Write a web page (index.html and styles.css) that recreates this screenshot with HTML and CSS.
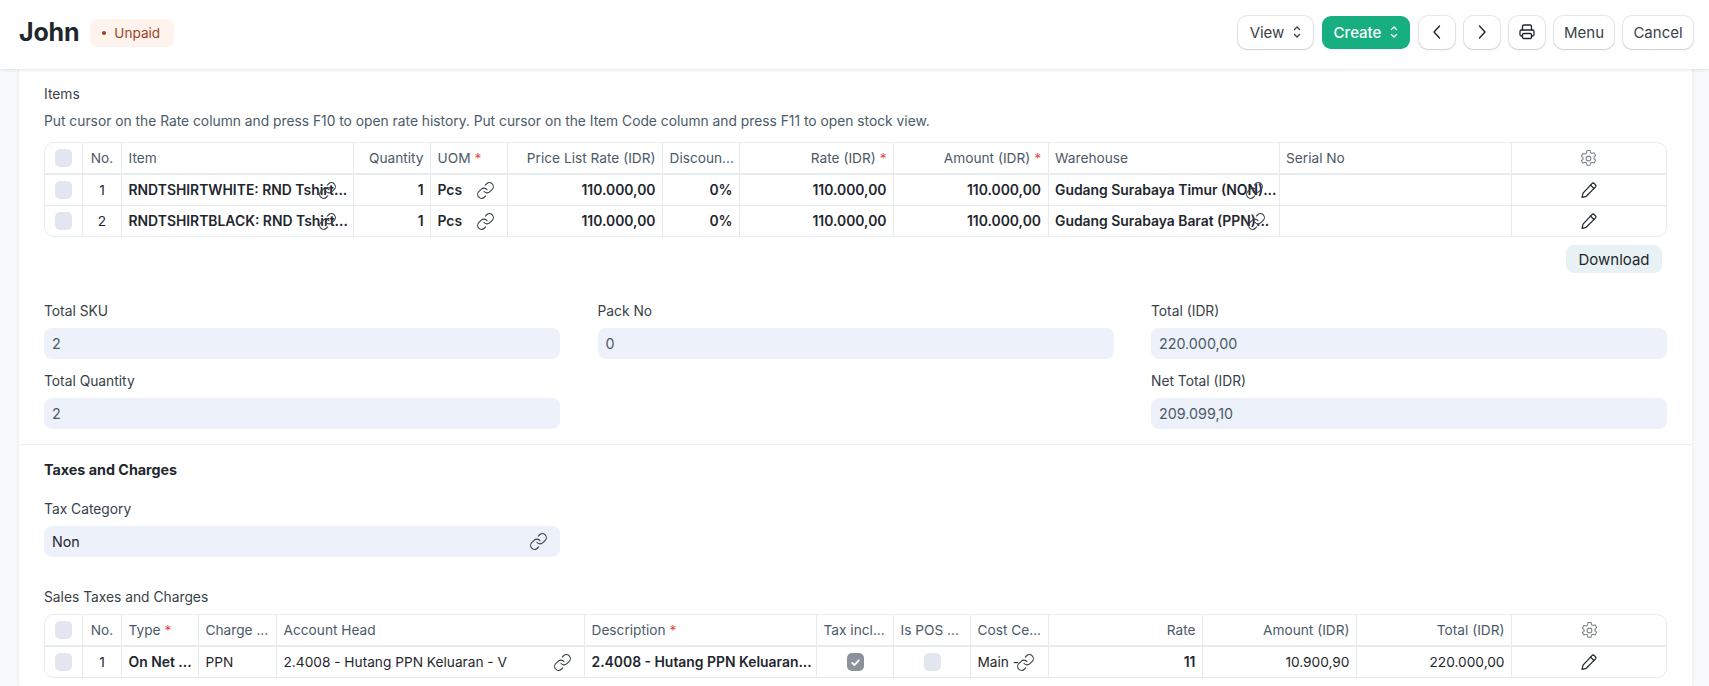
FILE: index.html
```html
<!DOCTYPE html>
<html lang="en">
<head>
  <meta charset="UTF-8" />
  <title>John</title>
  <link rel="stylesheet" href="styles.css">
</head>
<body>
  <svg class="icon-defs" aria-hidden="true">
    <symbol id="i-link" viewBox="0 0 24 24" fill="none" stroke="currentColor" stroke-width="1.350" stroke-linecap="round" stroke-linejoin="round">
      <path d="M10 13a5 5 0 0 0 7.540.540l3-3a5 5 0 0 0-7.070-7.070l-1.720 1.710"/>
      <path d="M14 11a5 5 0 0 0-7.540-.540l-3 3a5 5 0 0 0 7.070 7.070l1.710-1.710"/>
    </symbol>
    <symbol id="i-pencil" viewBox="0 0 16 16" fill="none" stroke="currentColor" stroke-width="1.100" stroke-linecap="round" stroke-linejoin="round">
      <path d="M10.600 2.300a1.500 1.500 0 0 1 2.100 0l1 1a1.500 1.500 0 0 1 0 2.100L5.500 13.600l-3.700 1 .9-3.800z"/>
      <path d="M9.300 3.600l3.100 3.100"/>
    </symbol>
    <symbol id="i-gear" viewBox="0 0 16 16" fill="none" stroke="currentColor" stroke-width="0.900" stroke-linejoin="round">
      <path d="M6.700 1.200h2.600l.4 1.900 1.200.7 1.800-.6 1.300 2.300-1.400 1.200v1.500l1.400 1.200-1.300 2.300-1.800-.6-1.200.7-.4 1.900H6.700l-.4-1.900-1.200-.7-1.800.6L2 9.900l1.400-1.200V7.200L2 6l1.300-2.300 1.800.6 1.200-.7z"/>
      <circle cx="8" cy="8" r="2"/>
    </symbol>
    <symbol id="i-updown" viewBox="0 0 8 14" fill="none" stroke="currentColor" stroke-width="1.300" stroke-linecap="round" stroke-linejoin="round">
      <path d="M1.500 4.500L4 2l2.500 2.500"/>
      <path d="M1.500 9.500L4 12l2.500-2.500"/>
    </symbol>
  </svg>

  <header class="page-head">
    <div class="title-wrap">
      <h1 class="title">John</h1>
      <span class="badge"><i class="badge-dot"></i>Unpaid</span>
    </div>
    <div class="actions">
      <button class="btn btn-view">View <svg class="updown"><use href="#i-updown"/></svg></button>
      <button class="btn btn-primary">Create <svg class="updown"><use href="#i-updown"/></svg></button>
      <button class="btn btn-icon">
        <svg width="16" height="16" viewBox="0 0 16 16" fill="none" stroke="currentColor" stroke-width="1.400" stroke-linecap="round" stroke-linejoin="round"><path d="M10.500 2L5 8l5.500 6"/></svg>
      </button>
      <button class="btn btn-icon">
        <svg width="16" height="16" viewBox="0 0 16 16" fill="none" stroke="currentColor" stroke-width="1.400" stroke-linecap="round" stroke-linejoin="round"><path d="M5.500 2L11 8l-5.500 6"/></svg>
      </button>
      <button class="btn btn-icon">
        <svg width="18" height="18" viewBox="0 0 18 18" fill="none" stroke="currentColor" stroke-width="1.300" stroke-linecap="round" stroke-linejoin="round"><path d="M4.500 7V3.500a1.500 1.500 0 0 1 1.500-1.500h6a1.500 1.500 0 0 1 1.500 1.500V7"/><path d="M4.500 13H3.500A1.500 1.500 0 0 1 2 11.500V8.500A1.500 1.500 0 0 1 3.500 7h11A1.500 1.500 0 0 1 16 8.500v3a1.500 1.500 0 0 1-1.500 1.500h-1"/><rect x="4.500" y="10.500" width="9" height="5" rx="1.200"/></svg>
      </button>
      <button class="btn btn-menu">Menu</button>
      <button class="btn btn-cancel">Cancel</button>
    </div>
  </header>

  <main class="sheet">
    <section class="items-section">
      <div class="grid-label">Items</div>
      <p class="grid-help">Put cursor on the Rate column and press F10 to open rate history. Put cursor on the Item Code column and press F11 to open stock view.</p>

      <div class="grid items-grid">
        <div class="row row-head">
          <div class="cell center"><span class="check"></span></div>
          <div class="cell center">No.</div>
          <div class="cell">Item</div>
          <div class="cell right">Quantity</div>
          <div class="cell">UOM <span class="req">*</span></div>
          <div class="cell right">Price List Rate (IDR)</div>
          <div class="cell">Discoun...</div>
          <div class="cell right">Rate (IDR) <span class="req">*</span></div>
          <div class="cell right">Amount (IDR) <span class="req">*</span></div>
          <div class="cell">Warehouse</div>
          <div class="cell">Serial No</div>
          <div class="cell center"><svg class="gear"><use href="#i-gear"/></svg></div>
        </div>
        <div class="row">
          <div class="cell center"><span class="check"></span></div>
          <div class="cell center">1</div>
          <div class="cell bold clip">RNDTSHIRTWHITE: RND Tshirt...<svg class="link link-item"><use href="#i-link"/></svg></div>
          <div class="cell right bold">1</div>
          <div class="cell bold">Pcs<svg class="link"><use href="#i-link"/></svg></div>
          <div class="cell right bold">110.000,00</div>
          <div class="cell right bold">0%</div>
          <div class="cell right bold">110.000,00</div>
          <div class="cell right bold">110.000,00</div>
          <div class="cell bold clip">Gudang Surabaya Timur (NON)...<svg class="link link-wh"><use href="#i-link"/></svg></div>
          <div class="cell"></div>
          <div class="cell center"><svg class="pencil"><use href="#i-pencil"/></svg></div>
        </div>
        <div class="row">
          <div class="cell center"><span class="check"></span></div>
          <div class="cell center">2</div>
          <div class="cell bold clip">RNDTSHIRTBLACK: RND Tshirt...<svg class="link link-item"><use href="#i-link"/></svg></div>
          <div class="cell right bold">1</div>
          <div class="cell bold">Pcs<svg class="link"><use href="#i-link"/></svg></div>
          <div class="cell right bold">110.000,00</div>
          <div class="cell right bold">0%</div>
          <div class="cell right bold">110.000,00</div>
          <div class="cell right bold">110.000,00</div>
          <div class="cell bold clip">Gudang Surabaya Barat (PPN)...<svg class="link link-wh2"><use href="#i-link"/></svg></div>
          <div class="cell"></div>
          <div class="cell center"><svg class="pencil"><use href="#i-pencil"/></svg></div>
        </div>
      </div>

      <div class="grid-footer">
        <button class="btn-download">Download</button>
      </div>

      <div class="field-columns">
        <div class="field-col">
          <div class="field">
            <label>Total SKU</label>
            <div class="control muted">2</div>
          </div>
          <div class="field">
            <label>Total Quantity</label>
            <div class="control muted">2</div>
          </div>
        </div>
        <div class="field-col">
          <div class="field">
            <label>Pack No</label>
            <div class="control muted">0</div>
          </div>
        </div>
        <div class="field-col">
          <div class="field">
            <label>Total (IDR)</label>
            <div class="control muted">220.000,00</div>
          </div>
          <div class="field">
            <label>Net Total (IDR)</label>
            <div class="control muted">209.099,10</div>
          </div>
        </div>
      </div>
    </section>

    <section class="taxes-section">
      <h2 class="section-title">Taxes and Charges</h2>
      <div class="field-columns">
        <div class="field-col">
          <div class="field">
            <label>Tax Category</label>
            <div class="control">Non<svg class="link"><use href="#i-link"/></svg></div>
          </div>
        </div>
      </div>

      <div class="grid-label taxes-label">Sales Taxes and Charges</div>
      <div class="grid taxes-grid">
        <div class="row row-head">
          <div class="cell center"><span class="check"></span></div>
          <div class="cell center">No.</div>
          <div class="cell">Type <span class="req">*</span></div>
          <div class="cell">Charge ...</div>
          <div class="cell">Account Head</div>
          <div class="cell">Description <span class="req">*</span></div>
          <div class="cell">Tax incl...</div>
          <div class="cell">Is POS ...</div>
          <div class="cell">Cost Ce...</div>
          <div class="cell right">Rate</div>
          <div class="cell right">Amount (IDR)</div>
          <div class="cell right">Total (IDR)</div>
          <div class="cell center"><svg class="gear"><use href="#i-gear"/></svg></div>
        </div>
        <div class="row">
          <div class="cell center"><span class="check"></span></div>
          <div class="cell center">1</div>
          <div class="cell bold">On Net ...</div>
          <div class="cell">PPN</div>
          <div class="cell">2.4008 - Hutang PPN Keluaran - V<svg class="link"><use href="#i-link"/></svg></div>
          <div class="cell bold">2.4008 - Hutang PPN Keluaran...</div>
          <div class="cell center">
            <span class="check checked">
              <svg width="11" height="11" viewBox="0 0 10 10" fill="none" stroke="#fff" stroke-width="1.600" stroke-linecap="round" stroke-linejoin="round"><path d="M2 5.300l2 2 4-4.300"/></svg>
            </span>
          </div>
          <div class="cell center"><span class="check"></span></div>
          <div class="cell clip">Main -<svg class="link link-cost"><use href="#i-link"/></svg></div>
          <div class="cell right bold">11</div>
          <div class="cell right">10.900,90</div>
          <div class="cell right">220.000,00</div>
          <div class="cell center"><svg class="pencil"><use href="#i-pencil"/></svg></div>
        </div>
      </div>
    </section>
  </main>
</body>
</html>
```

FILE: styles.css
```css
* {
  box-sizing: border-box;
}

html, body {
  height: 100%;
}

body {
  margin: 0;
  background: #f8f9fa;
  color: #1f272e;
  font-family: "Inter", "Liberation Sans", sans-serif;
  font-size: 14.3px;
  overflow: hidden;
}

.icon-defs {
  display: none;
}

/* page head */
.page-head {
  height: 69px;
  background: #fff;
  box-shadow: 0 1px 3px rgba(25, 39, 52, 0.12);
  display: flex;
  align-items: center;
  justify-content: space-between;
  padding: 0 16px 5px 19px;
  position: relative;
}

.title-wrap {
  display: flex;
  align-items: center;
  gap: 11px;
}

.title {
  margin: 0;
  font-size: 25px;
  font-weight: 700;
  letter-spacing: -0.2px;
}

.badge {
  display: flex;
  align-items: center;
  height: 28px;
  margin-top: 1px;
  padding: 0 14px 0 12px;
  background: #fff3ed;
  color: #9c3f1f;
  border-radius: 8px;
  font-size: 13.600px;
}

.badge-dot {
  width: 4px;
  height: 4px;
  margin-right: 8px;
  border-radius: 50%;
  background: #9c3f1f;
}

.actions {
  display: flex;
  gap: 9px;
}

.btn {
  height: 33px;
  display: flex;
  align-items: center;
  justify-content: center;
  padding: 0;
  font: inherit;
  font-size: 15px;
  color: #383f47;
  background: #fff;
  border: none;
  border-radius: 9px;
  box-shadow: 0 0 0 1px rgba(25, 39, 52, 0.1), 0 1px 2px rgba(25, 39, 52, 0.14);
}

.btn-view { width: 75px; gap: 9px; }
.btn-primary { width: 88px; gap: 9px; background: #17ae80; color: #fff; box-shadow: none; font-weight: 500; }
.btn-icon { width: 36px; color: #1f272e; }
.btn-menu { width: 60px; }
.btn-cancel { width: 70px; }

.updown {
  width: 8px;
  height: 14px;
}

/* white form sheet */
.sheet {
  margin: 0 17px 0 19px;
  min-height: 617px;
  background: #fff;
  box-shadow: 0 0 3px rgba(25, 39, 52, 0.1);
}

.items-section {
  padding: 15px 25px 15px;
  border-bottom: 1px solid #edf0f2;
}

.grid-label {
  line-height: 20px;
  color: #383f47;
  font-size: 13.800px;
}

.grid-help {
  margin: 7px 0 11px;
  line-height: 20px;
  color: #4c5a67;
  font-size: 13.800px;
}

.grid {
  border: 1px solid #e8ebee;
  border-radius: 10px;
  background: #fff;
}

.row {
  display: grid;
  height: 31px;
  border-top: 1px solid #e8ebee;
}

.items-grid .row {
  grid-template-columns: 38px 39px 232px 77px 77px 155px 77px 154px 154.500px 231px 232px 1fr;
}

.taxes-grid .row {
  grid-template-columns: 38px 39px 77px 78px 308px 232px 77px 77px 78px 154px 154px 155px 1fr;
}

.row-head {
  height: 32px;
  border-top: none;
  border-bottom: 2px solid #e8ebee;
  color: #4c5a67;
}

.row-head + .row {
  height: 30px;
  border-top: none;
}

.cell {
  position: relative;
  display: flex;
  align-items: center;
  padding: 0 6.500px;
  border-right: 1px solid #e8ebee;
  white-space: pre;
  overflow: hidden;
  font-size: 13.700px;
}

.cell:last-child {
  border-right: none;
}

.center { justify-content: center; padding: 0; }
.right { justify-content: flex-end; }
.bold { font-weight: 600; font-size: 13.900px; }
.clip { overflow: hidden; }

.req {
  color: #e24c4c;
}

.check {
  width: 17px;
  height: 18px;
  display: flex;
  align-items: center;
  justify-content: center;
  border-radius: 5px;
  background: #e2e6f0;
}

.checked {
  background: #8b929b;
}

.link {
  position: absolute;
  right: 12.500px;
  top: 50%;
  width: 19px;
  height: 19px;
  margin-top: -9.500px;
  color: #383f47;
}

.link-item { right: 16.500px; }
.link-wh { right: 14.500px; }
.link-wh2 { right: 12.500px; }
.link-cost { right: 13.500px; }

.gear {
  width: 19px;
  height: 19px;
  color: #7c858e;
}

.pencil {
  width: 18px;
  height: 18px;
  color: #1f272e;
}

.grid-footer {
  display: flex;
  justify-content: flex-end;
  padding: 8px 5px 0 0;
}

.btn-download {
  height: 28px;
  width: 96px;
  padding: 0;
  border: none;
  border-radius: 8px;
  background: #e8f1f3;
  color: #1f272e;
  font: inherit;
  font-size: 15px;
}

.field-columns {
  display: grid;
  grid-template-columns: repeat(3, 516px);
  column-gap: 37.500px;
}

.items-section .field-columns {
  margin-top: 28px;
}

.field {
  margin-bottom: 12px;
}

.field:last-child {
  margin-bottom: 0;
}

.field label {
  display: block;
  line-height: 20px;
  margin-bottom: 7px;
  color: #383f47;
  font-size: 13.800px;
}

.control {
  position: relative;
  height: 31px;
  display: flex;
  align-items: center;
  padding: 0 8px;
  border-radius: 8px;
  background: #edf1fa;
  color: #1f272e;
}

.muted {
  color: #4c5a67;
}

.taxes-section {
  padding: 15px 25px 0;
}

.section-title {
  margin: 0 0 19px;
  line-height: 20px;
  font-size: 14.300px;
  font-weight: 700;
}

.taxes-label {
  margin: 30px 0 7px;
}
```
